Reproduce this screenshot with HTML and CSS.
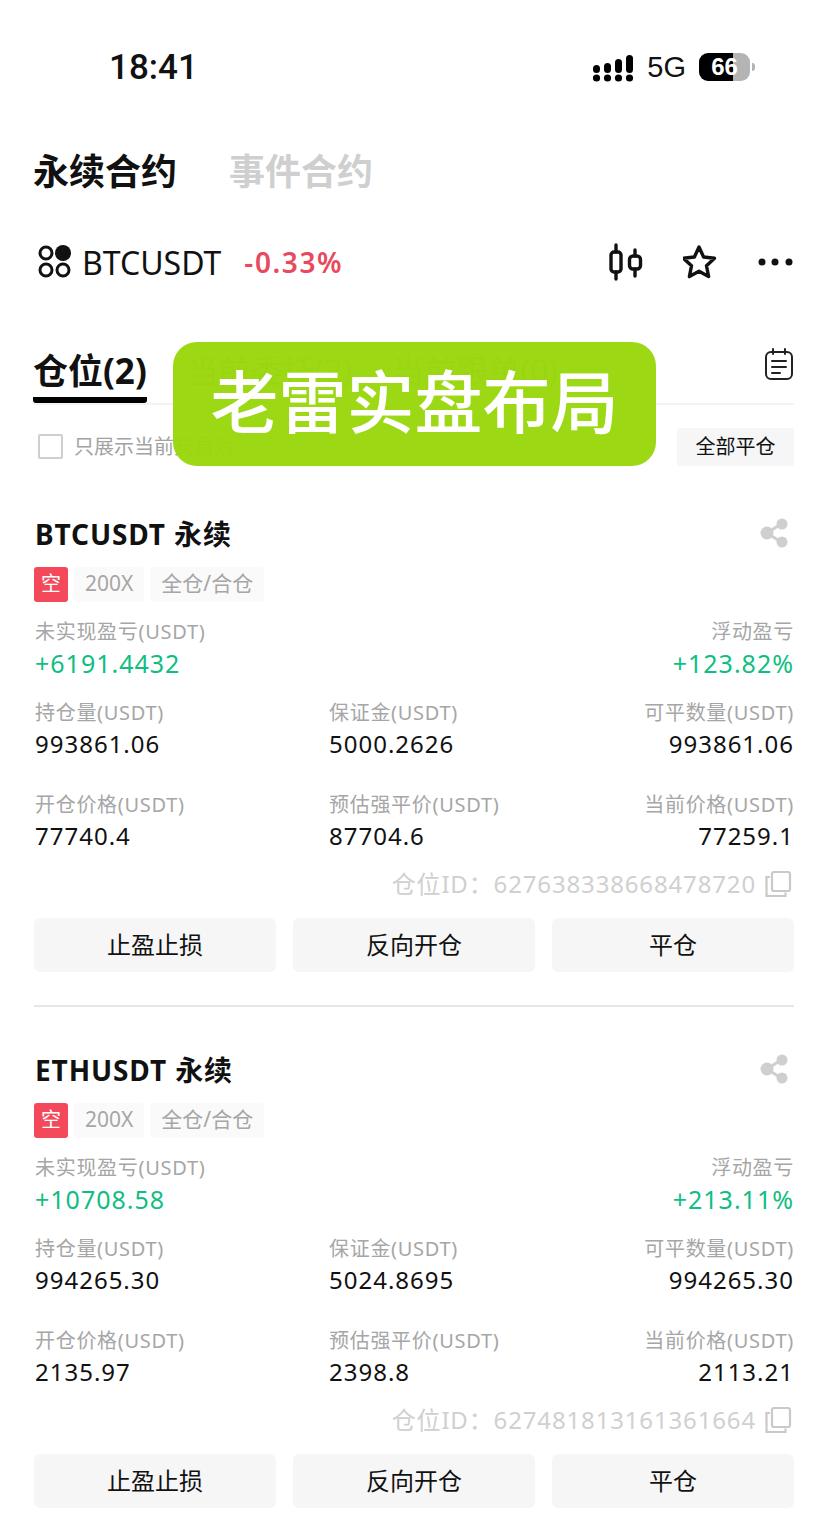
FILE: index.html
```html
<!DOCTYPE html>
<html lang="zh-CN">
<head>
    <meta charset="UTF-8">
    <meta name="viewport" content="width=device-width, initial-scale=1.0">
    <title>永续合约</title>
    <link rel="stylesheet" href="styles.css">
</head>
<body>
    <header class="status">
        <span class="time">18:41</span>
        <div class="status-right">
            <svg class="signal" width="42" height="30" viewBox="0 0 42 30">
                <rect x="0" y="13" width="7" height="8" rx="3.5"/><rect x="11" y="11" width="7" height="10" rx="3.5"/><rect x="22" y="7" width="7" height="14" rx="3.5"/><rect x="33" y="3" width="7" height="18" rx="3.5"/>
                <circle cx="3.5" cy="26" r="3.6"/><circle cx="14.5" cy="26" r="3.6"/><circle cx="25.5" cy="26" r="3.6"/><circle cx="36.5" cy="26" r="3.6"/>
            </svg>
            <span class="network">5G</span>
            <div class="battery"><span class="battery-level">66</span></div>
            <span class="battery-cap"></span>
        </div>
    </header>

    <nav class="tabs">
        <span class="tab-active">永续合约</span>
        <span class="tab-idle">事件合约</span>
    </nav>

    <section class="market">
        <svg class="market-logo" width="36" height="36" viewBox="0 0 36 36">
            <circle cx="9" cy="9" r="6" fill="none" stroke="#111" stroke-width="3"/>
            <circle cx="26" cy="9" r="8" fill="#111"/>
            <circle cx="9" cy="26" r="6" fill="none" stroke="#111" stroke-width="3"/>
            <circle cx="26" cy="26" r="6" fill="none" stroke="#111" stroke-width="3"/>
        </svg>
        <span class="market-name">BTCUSDT</span>
        <span class="market-change">-0.33%</span>
        <div class="market-actions">
            <svg width="36" height="38" viewBox="0 0 36 38" fill="none" stroke="#111" stroke-width="3.4" stroke-linecap="round" stroke-linejoin="round">
                <rect x="3" y="9" width="10" height="20" rx="3"/><path d="M8 2v7M8 29v7"/>
                <rect x="21.500" y="13" width="11" height="13" rx="3.500"/><path d="M27 7v6M27 26v7"/>
            </svg>
            <svg width="36" height="36" viewBox="2 0 36 36" fill="none" stroke="#111" stroke-width="3.400" stroke-linejoin="round">
                <path d="M18 3l4.600 10 10.900 1.300-8 7.500 2.100 10.800L18 27.200 8.400 32.600l2.100-10.800-8-7.500L13.400 13z"/>
            </svg>
            <svg width="36" height="10" viewBox="0 0 36 10" fill="#111">
                <circle cx="4" cy="5" r="3.500"/><circle cx="17" cy="5" r="3.500"/><circle cx="31" cy="5" r="3.500"/>
            </svg>
        </div>
    </section>

    <section class="subtabs">
        <span class="subtab-active">仓位(2)</span>
        <span class="subtab">当前委托(2)</span>
        <span class="subtab">当前跟单(0)</span>
        <svg class="notes" width="30" height="32" viewBox="0 0 30 32" fill="none" stroke="#222" stroke-width="2" stroke-linecap="round">
            <rect x="2" y="4" width="26" height="27" rx="5"/>
            <path d="M9 1v5M21 1v5M8 13h14M8 19h14M8 25h8"/>
        </svg>
    </section>

    <section class="filter">
        <label class="only-current"><span class="checkbox"></span>只展示当前交易对</label>
        <button class="close-all" type="button">全部平仓</button>
    </section>

    <article class="position">
        <div class="position-head">
            <h2 class="symbol">BTCUSDT 永续</h2>
            <svg class="share" width="28" height="30" viewBox="0 0 28 30" fill="#cfcfcf" stroke="#cfcfcf">
                <path d="M7 15L21 6M7 15l14 9" stroke-width="3"/>
                <circle cx="7" cy="15" r="6.500" stroke="none"/><circle cx="22" cy="6" r="5.500" stroke="none"/><circle cx="22" cy="24" r="5.500" stroke="none"/>
            </svg>
        </div>
        <div class="tags">
            <span class="tag-side">空</span>
            <span class="tag">200X</span>
            <span class="tag">全仓/合仓</span>
        </div>
        <div class="pnl">
            <div>
                <div class="label">未实现盈亏(USDT)</div>
                <div class="value green">+6191.4432</div>
            </div>
            <div class="right">
                <div class="label">浮动盈亏</div>
                <div class="value green">+123.82%</div>
            </div>
        </div>
        <div class="metrics">
            <div><div class="label">持仓量(USDT)</div><div class="value">993861.06</div></div>
            <div><div class="label">保证金(USDT)</div><div class="value">5000.2626</div></div>
            <div class="right"><div class="label">可平数量(USDT)</div><div class="value">993861.06</div></div>
            <div><div class="label">开仓价格(USDT)</div><div class="value">77740.4</div></div>
            <div><div class="label">预估强平价(USDT)</div><div class="value">87704.6</div></div>
            <div class="right"><div class="label">当前价格(USDT)</div><div class="value">77259.1</div></div>
        </div>
        <div class="position-id">
            <span>仓位ID：627638338668478720</span>
            <svg width="28" height="28" viewBox="0 0 28 28" fill="none" stroke="#c9c9c9" stroke-width="2.200">
                <path d="M6 7H2.500v19h19v-3.500"/>
                <rect x="8" y="2" width="18" height="19" rx="2"/>
            </svg>
        </div>
        <div class="actions">
            <button type="button">止盈止损</button>
            <button type="button">反向开仓</button>
            <button type="button">平仓</button>
        </div>
    </article>

    <article class="position">
        <div class="position-head">
            <h2 class="symbol">ETHUSDT 永续</h2>
            <svg class="share" width="28" height="30" viewBox="0 0 28 30" fill="#cfcfcf" stroke="#cfcfcf">
                <path d="M7 15L21 6M7 15l14 9" stroke-width="3"/>
                <circle cx="7" cy="15" r="6.500" stroke="none"/><circle cx="22" cy="6" r="5.500" stroke="none"/><circle cx="22" cy="24" r="5.500" stroke="none"/>
            </svg>
        </div>
        <div class="tags">
            <span class="tag-side">空</span>
            <span class="tag">200X</span>
            <span class="tag">全仓/合仓</span>
        </div>
        <div class="pnl">
            <div>
                <div class="label">未实现盈亏(USDT)</div>
                <div class="value green">+10708.58</div>
            </div>
            <div class="right">
                <div class="label">浮动盈亏</div>
                <div class="value green">+213.11%</div>
            </div>
        </div>
        <div class="metrics">
            <div><div class="label">持仓量(USDT)</div><div class="value">994265.30</div></div>
            <div><div class="label">保证金(USDT)</div><div class="value">5024.8695</div></div>
            <div class="right"><div class="label">可平数量(USDT)</div><div class="value">994265.30</div></div>
            <div><div class="label">开仓价格(USDT)</div><div class="value">2135.97</div></div>
            <div><div class="label">预估强平价(USDT)</div><div class="value">2398.8</div></div>
            <div class="right"><div class="label">当前价格(USDT)</div><div class="value">2113.21</div></div>
        </div>
        <div class="position-id">
            <span>仓位ID：627481813161361664</span>
            <svg width="28" height="28" viewBox="0 0 28 28" fill="none" stroke="#c9c9c9" stroke-width="2.200">
                <path d="M6 7H2.500v19h19v-3.500"/>
                <rect x="8" y="2" width="18" height="19" rx="2"/>
            </svg>
        </div>
        <div class="actions">
            <button type="button">止盈止损</button>
            <button type="button">反向开仓</button>
            <button type="button">平仓</button>
        </div>
    </article>

    <div class="banner">老雷实盘布局</div>
</body>
</html>
```

FILE: styles.css
```css
* {
    box-sizing: border-box;
}
html,
body {
    margin: 0;
    height: 1539px;
    overflow: hidden;
}
body {
    position: relative;
    background-color: #fff;
    color: #111;
    font-family: "Noto Sans", "Noto Sans CJK SC", sans-serif;
}
button {
    font-family: inherit;
    border: 0;
    color: #111;
}

.status {
    display: flex;
    align-items: center;
    justify-content: space-between;
    height: 134px;
    padding: 0 73px 0 109px;
}
.time {
    font-family: Roboto, sans-serif;
    font-size: 35px;
    font-weight: 500;
}
.status-right {
    display: flex;
    align-items: center;
}
.signal {
    fill: #000;
    margin: 0 12px 0 0;
}
.network {
    font-family: "Liberation Sans", sans-serif;
    font-size: 29px;
    margin-right: 13px;
}
.battery {
    position: relative;
    width: 51px;
    height: 28px;
    border-radius: 9px;
    overflow: hidden;
    background: linear-gradient(90deg, #000 67%, #b4b4b4 67%);
    text-align: center;
}
.battery-level {
    font-family: "Liberation Sans", sans-serif;
    font-size: 24px;
    font-weight: 700;
    line-height: 28px;
    color: #fff;
}
.battery-cap {
    width: 3px;
    height: 8px;
    margin-left: 2px;
    background-color: #b4b4b4;
    border-radius: 0 3px 3px 0;
}

.tabs {
    display: flex;
    align-items: center;
    gap: 52px;
    height: 76px;
    padding: 0 0 6px 33px;
    font-size: 36px;
    font-weight: 700;
}
.tab-idle {
    color: #cfcfcf;
}

.market {
    display: flex;
    align-items: center;
    height: 104px;
    padding: 0 34px 0 37px;
}
.market-name {
    margin-left: 9px;
    font-size: 32px;
}
.market-change {
    margin-left: 23px;
    color: #e8495d;
    font-size: 28px;
    font-weight: 600;
    letter-spacing: 1.6px;
}
.market-actions {
    display: flex;
    align-items: center;
    gap: 39px;
    margin-left: auto;
}

.subtabs {
    display: flex;
    align-items: flex-start;
    gap: 40px;
    height: 65px;
    margin: 26px 34px 0 33px;
    border-bottom: 2px solid #f3f3f3;
}
.subtab-active {
    height: 63px;
    padding-top: 8px;
    border-bottom: 6px solid #000;
    border-radius: 0 0 3px 3px;
    font-size: 35px;
    font-weight: 700;
    line-height: 46px;
}
.subtab {
    padding-top: 8px;
    color: #a9a9a9;
    font-size: 32px;
    line-height: 46px;
}
.notes {
    margin-left: auto;
    margin-top: 8px;
}

.filter {
    display: flex;
    align-items: center;
    justify-content: space-between;
    height: 38px;
    margin: 23px 34px 0 38px;
}
.only-current {
    display: flex;
    align-items: center;
    gap: 11px;
    padding-bottom: 4px;
    color: #a3a3a3;
    font-size: 20px;
}
.checkbox {
    width: 25px;
    height: 25px;
    margin-top: 2px;
    border: 2px solid #cfcfcf;
    border-radius: 2px;
}
.close-all {
    width: 117px;
    height: 38px;
    padding: 0 0 4px;
    background-color: #f6f6f6;
    border-radius: 3px;
    font-size: 20px;
}

.position {
    height: 536px;
    margin: 0 34px;
    padding-top: 44px;
    border-bottom: 2px solid #e6e6e6;
}
.filter + .position {
    height: 541px;
    padding-top: 49px;
}
.position:last-of-type {
    border-bottom: 0;
}
.position-head {
    display: flex;
    align-items: center;
    justify-content: space-between;
    height: 40px;
    padding: 0 0 4px 1px;
}
.symbol {
    margin: 0;
    font-size: 28px;
    font-weight: 700;
    letter-spacing: 0.9px;
}
.share {
    margin-right: 6px;
}
.tags {
    display: flex;
    gap: 6px;
    height: 35px;
    margin-top: 12px;
}
.tag-side {
    width: 34px;
    background-color: #f4495a;
    border-radius: 3px;
    color: #fff;
    font-size: 20px;
    line-height: 33px;
    text-align: center;
}
.tag {
    padding: 0 11px;
    background-color: #fafafa;
    border-radius: 3px;
    color: #a6a6a6;
    font-size: 21px;
    line-height: 33px;
}

.pnl {
    display: flex;
    justify-content: space-between;
    margin-top: 15px;
}
.metrics {
    display: grid;
    grid-template-columns: 294px 1fr auto;
    row-gap: 30px;
    margin-top: 19px;
}
.pnl > :first-child,
.metrics > div {
    padding-left: 1px;
}
.right {
    text-align: right;
}
.label {
    height: 30px;
    color: #a6a6a6;
    font-size: 20px;
    letter-spacing: 0.7px;
    line-height: 30px;
}
.value {
    height: 32px;
    font-size: 24px;
    line-height: 32px;
    letter-spacing: 1px;
}
.green {
    color: #0fbe82;
    font-size: 25px;
}

.position-id {
    display: flex;
    align-items: center;
    justify-content: flex-end;
    gap: 8px;
    height: 32px;
    margin-top: 16px;
    padding: 0 2px 4px 0;
    color: #d0d0d0;
    font-size: 24px;
    letter-spacing: 0.85px;
}
.position-id svg {
    margin-top: 4px;
}
.actions {
    display: grid;
    grid-template-columns: repeat(3, 1fr);
    gap: 17px;
    margin-top: 18px;
}
.actions button {
    height: 54px;
    padding: 0 0 4px;
    background-color: #f6f6f7;
    border-radius: 6px;
    font-size: 24px;
}

.banner {
    position: absolute;
    left: 173px;
    top: 342px;
    width: 483px;
    height: 124px;
    background-color: rgba(153, 214, 10, 0.96);
    border-radius: 24px;
    color: #fff;
    font-size: 68px;
    font-weight: 500;
    line-height: 120px;
    text-align: center;
}
```
